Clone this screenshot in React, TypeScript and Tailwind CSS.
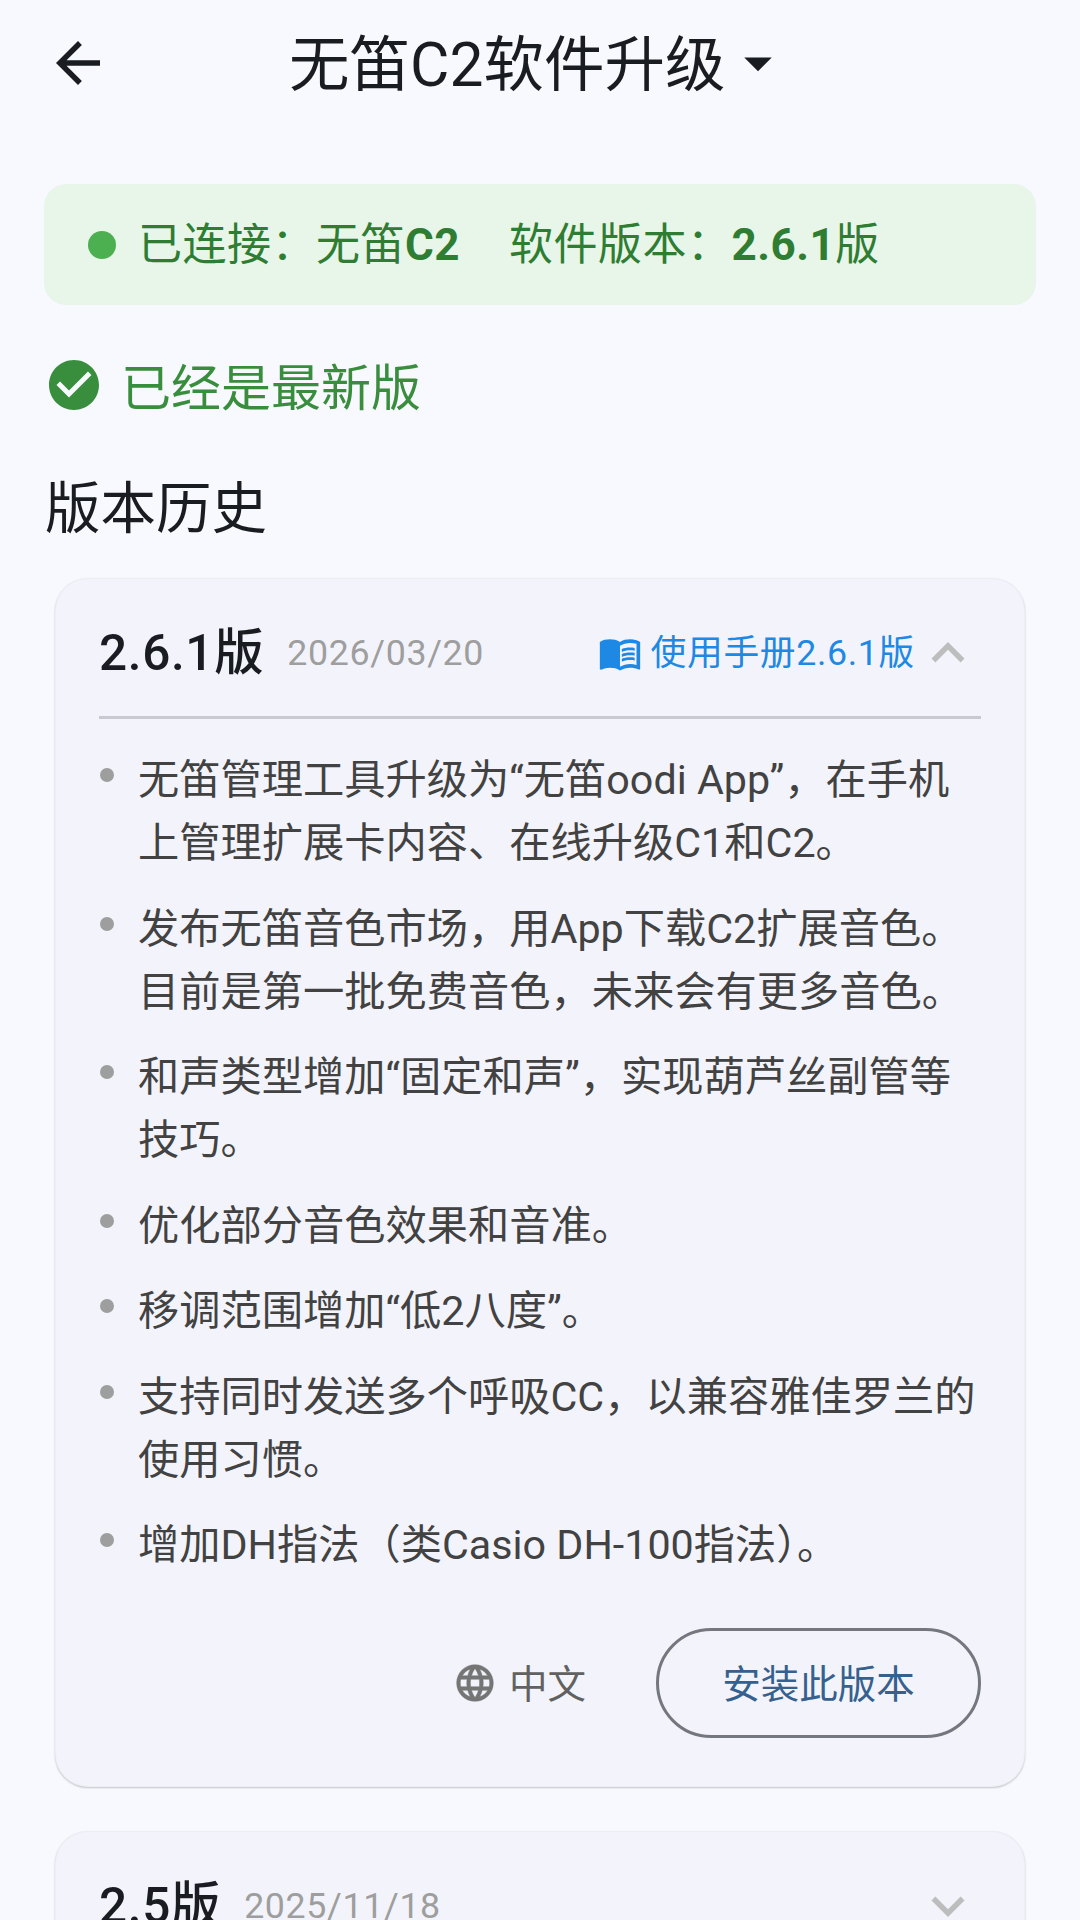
const notes: string[][] = [
  ["无笛管理工具升级为“无笛oodi App”\uFF0C在手机", "上管理扩展卡内容、在线升级C1和C2。"],
  ["发布无笛音色市场\uFF0C用App下载C2扩展音色。", "目前是第一批免费音色\uFF0C未来会有更多音色。"],
  ["和声类型增加“固定和声”\uFF0C实现葫芦丝副管等", "技巧。"],
  ["优化部分音色效果和音准。"],
  ["移调范围增加“低2八度”。"],
  ["支持同时发送多个呼吸CC\uFF0C以兼容雅佳罗兰的", "使用习惯。"],
  ["增加DH指法\uFF08类Casio DH-100指法\uFF09。"],
]

function MaterialIcon({ d, className }: { d: string; className: string }) {
  return (
    <svg viewBox="0 0 24 24" fill="currentColor" className={className}>
      <path d={d} />
    </svg>
  )
}

const chevronUp = "M12 8l-6 6 1.41 1.41L12 10.83l4.59 4.58L18 14z"
const chevronDown = "M16.59 8.59L12 13.17 7.41 8.59 6 10l6 6 6-6z"
const globe =
  "M11.99 2C6.47 2 2 6.48 2 12s4.47 10 9.99 10C17.52 22 22 17.52 22 12S17.52 2 11.99 2zm6.93 6h-2.95c-.32-1.25-.78-2.45-1.38-3.56 1.84.63 3.37 1.91 4.33 3.56zM12 4.04c.83 1.2 1.48 2.53 1.91 3.96h-3.82c.43-1.43 1.08-2.76 1.91-3.96zM4.26 14C4.1 13.36 4 12.69 4 12s.1-1.36.26-2h3.38c-.08.66-.14 1.32-.14 2 0 .68.06 1.34.14 2H4.26zm.82 2h2.95c.32 1.25.78 2.45 1.38 3.56-1.84-.63-3.37-1.9-4.33-3.56zm2.95-8H5.08c.96-1.66 2.49-2.93 4.33-3.56C8.81 5.55 8.35 6.75 8.03 8zM12 19.96c-.83-1.2-1.48-2.53-1.91-3.96h3.82c-.43 1.43-1.08 2.76-1.91 3.96zM14.34 14H9.66c-.09-.66-.16-1.32-.16-2 0-.68.07-1.35.16-2h4.68c.09.65.16 1.32.16 2 0 .68-.07 1.34-.16 2zm.25 5.56c.6-1.11 1.06-2.31 1.38-3.56h2.95c-.96 1.65-2.49 2.93-4.33 3.56zM16.36 14c.08-.66.14-1.32.14-2 0-.68-.06-1.34-.14-2h3.38c.16.64.26 1.31.26 2s-.1 1.36-.26 2h-3.38z"
const book =
  "M21 5c-1.11-.35-2.33-.5-3.5-.5-1.95 0-4.05.4-5.5 1.5-1.45-1.1-3.55-1.5-5.5-1.5S2.45 4.9 1 6v14.65c0 .25.25.5.5.5.1 0 .15-.05.25-.05C3.1 20.45 5.05 20 6.5 20c1.95 0 4.05.4 5.5 1.5 1.35-.85 3.8-1.5 5.5-1.5 1.65 0 3.35.3 4.75 1.05.1.05.15.05.25.05.25 0 .5-.25.5-.5V6c-.6-.45-1.25-.75-2-1zm0 13.5c-1.1-.35-2.3-.5-3.5-.5-1.7 0-4.15.65-5.5 1.5V8c1.35-.85 3.8-1.5 5.5-1.5 1.2 0 2.4.15 3.5.5v11.5zM17.5 10.5c.88 0 1.73.09 2.5.26V9.24c-.79-.15-1.64-.24-2.5-.24-1.7 0-3.24.29-4.5.83v1.66c1.13-.64 2.7-.99 4.5-.99zM13 12.49v1.66c1.13-.64 2.7-.99 4.5-.99.88 0 1.73.09 2.5.26V11.9c-.79-.15-1.64-.24-2.5-.24-1.7 0-3.24.3-4.5.83zM17.5 14.33c-1.7 0-3.24.29-4.5.83v1.66c1.13-.64 2.7-.99 4.5-.99.88 0 1.73.09 2.5.26v-1.52c-.79-.16-1.64-.24-2.5-.24z"

export default function App() {
  return (
    <div className="w-[1080px] h-[1920px] overflow-hidden bg-[#f8f9ff] font-[Roboto,'Noto_Sans_CJK_SC',sans-serif]">
      {/* App bar */}
      <div className="flex items-center h-[126px] pl-[45px] text-[#191c20]">
        <MaterialIcon
          className="w-[66px] h-[66px] shrink-0"
          d="M20 11H7.83l5.59-5.59L12 4l-8 8 8 8 1.41-1.41L7.83 13H20v-2z"
        />
        <span className="ml-[178px] pt-[5px] text-[60.5px] leading-[76px] whitespace-nowrap">无笛C2软件升级</span>
        <MaterialIcon className="w-[66px] h-[66px] shrink-0" d="M7 10l5 5 5-5z" />
      </div>

      {/* Connection banner */}
      <div className="flex items-center h-[121px] mt-[58px] mx-[44px] pl-[44px] rounded-[22px] bg-[#e8f5e9] text-[44px] leading-[56px] tracking-[0.5px] text-[#2e7d32] whitespace-nowrap">
        <div className="w-[28px] h-[28px] rounded-full bg-[#4caf50] shrink-0" />
        <span className="ml-[22px]">
          {"已连接\uFF1A无笛"}
          <span className="font-bold">C2</span>
        </span>
        <span className="ml-[49px]">
          {"软件版本\uFF1A"}
          <span className="font-bold">2.6.1</span>版
        </span>
      </div>

      {/* Up to date */}
      <div className="flex items-center h-[60px] mt-[50px] pl-[44px] text-[#388e3c]">
        <MaterialIcon
          className="w-[60px] h-[60px] shrink-0"
          d="M12 2C6.48 2 2 6.48 2 12s4.47 10 10 10 10-4.48 10-10S17.52 2 12 2zm-2 15l-5-5 1.41-1.41L10 14.17l7.59-7.59L19 8l-9 9z"
        />
        <span className="ml-[17px] pt-[8px] text-[50px] leading-[60px]">已经是最新版</span>
      </div>

      <h2 className="mt-[60px] ml-[45px] text-[55.5px] leading-[70px] font-normal text-[#191c20]">版本历史</h2>

      {/* Latest version */}
      <div className="mt-[33px] mx-[55px] rounded-[33px] bg-[#f3f4fb] border border-[#eceef4] shadow-[0_1px_2px_rgba(0,0,0,0.22)] px-[43px]">
        <div className="flex items-center h-[66px] mt-[41px]">
          <span className="text-[49.5px] leading-[60px] tracking-[0.65px] font-medium text-[#191c20]">2.6.1版</span>
          <span className="ml-[23px] text-[35.75px] leading-[46px] tracking-[0.65px] text-[#9e9e9e]">2026/03/20</span>
          <MaterialIcon className="w-[44px] h-[44px] ml-auto shrink-0 text-[#1e88e5]" d={book} />
          <span className="ml-[9px] text-[35.75px] leading-[46px] tracking-[0.65px] text-[#1e88e5] whitespace-nowrap">使用手册2.6.1版</span>
          <MaterialIcon className="w-[66px] h-[66px] shrink-0 text-[#bdbdbd]" d={chevronUp} />
        </div>
        <div className="h-[3px] mt-[30px] bg-[#c9cacf]" />

        <ul className="flex flex-col gap-[22.5px] mt-[30px]">
          {notes.map((lines, i) => (
            <li key={i} className="flex items-start">
              <div className="w-[14px] h-[14px] mt-[19px] ml-px rounded-full bg-[#9e9e9e] shrink-0" />
              <div className="ml-[24px] text-[41.25px] leading-[63px] text-[#424242] whitespace-nowrap">
                {lines.map((line) => (
                  <div key={line}>{line}</div>
                ))}
              </div>
            </li>
          ))}
        </ul>

        <div className="flex items-center justify-end mt-[51px] mb-[48px]">
          <MaterialIcon className="w-[44px] h-[44px] shrink-0 text-[#757575] stroke-current stroke-[0.25]" d={globe} />
          <span className="ml-[12px] pt-[3px] text-[38.5px] leading-[50px] text-[#616161]">中文</span>
          <button className="flex items-center justify-center w-[325px] h-[110px] ml-[70px] pt-[3px] rounded-full border-[3px] border-[#74777f] text-[38.5px] leading-[50px] text-[#36618e]">
            安装此版本
          </button>
        </div>
      </div>

      {/* Previous version, collapsed */}
      <div className="mt-[44px] mx-[55px] rounded-[33px] bg-[#f3f4fb] border border-[#eceef4] shadow-[0_1px_2px_rgba(0,0,0,0.22)] px-[43px]">
        <div className="flex items-center h-[66px] mt-[41px] mb-[43px]">
          <span className="text-[49.5px] leading-[60px] tracking-[0.65px] font-medium text-[#191c20]">2.5版</span>
          <span className="ml-[23px] text-[35.75px] leading-[46px] tracking-[0.65px] text-[#9e9e9e]">2025/11/18</span>
          <MaterialIcon className="w-[66px] h-[66px] ml-auto shrink-0 text-[#bdbdbd]" d={chevronDown} />
        </div>
      </div>
    </div>
  )
}
